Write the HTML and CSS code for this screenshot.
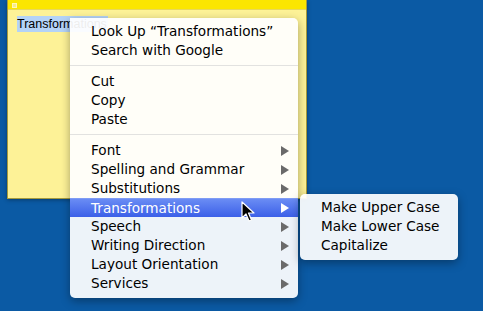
FILE: index.html
```html
<!DOCTYPE html>
<html>
<head>
    <meta name="viewport" content="width=device-width, initial-scale=1.0">
    <title>Sticky note - context menu</title>
    <link rel="stylesheet" href="styles.css">
</head>
<body>
    <div class="desktop">
        <div class="note">
            <div class="note-bar"><span class="note-box"></span></div>
            <div class="note-body">
                <span class="selected">Transformations</span>
            </div>
        </div>

        <!-- context menu -->
        <div class="menu">
            <div class="item">Look Up “Transformations”</div>
            <div class="item">Search with Google</div>
            <div class="sep"></div>
            <div class="item">Cut</div>
            <div class="item">Copy</div>
            <div class="item">Paste</div>
            <div class="sep"></div>
            <div class="item sub">Font</div>
            <div class="item sub">Spelling and Grammar</div>
            <div class="item sub">Substitutions</div>
            <div class="item sub active">Transformations</div>
            <div class="item sub">Speech</div>
            <div class="item sub">Writing Direction</div>
            <div class="item sub">Layout Orientation</div>
            <div class="item sub">Services</div>
        </div>

        <div class="menu submenu">
            <div class="item">Make Upper Case</div>
            <div class="item">Make Lower Case</div>
            <div class="item">Capitalize</div>
        </div>

        <svg class="cursor" width="14" height="22" viewBox="0 0 14 22">
            <path d="M1 1 L1 17 L5 13 L8 20 L10.5 19 L7.5 12 L13 12 Z" fill="#000" stroke="#fff" stroke-width="1.2" stroke-linejoin="round"/>
        </svg>
    </div>
</body>
</html>
```

FILE: styles.css
```css
body {
    margin: 0;
    background-color: #0b5aa4;
    font-family: "DejaVu Sans", sans-serif;
    font-size: 13.6px;
    color: #000;
}
.desktop {
    position: relative;
    width: 483px;
    height: 311px;
    overflow: hidden;
    padding-left: 7px;
    box-sizing: border-box;
}
.note {
    width: 300px;
    height: 199px;
    background: #fdf297;
    border: 1px solid #a59a3c;
    border-top: none;
    box-sizing: border-box;
    box-shadow: 0 1px 4px rgba(0,0,0,0.35);
}
.note-bar {
    height: 10px;
    background: #fbe600;
    border-bottom: 1px solid #e8d85a;
    padding: 3px 0 0 4px;
    box-sizing: border-box;
}
.note-box {
    display: block;
    width: 5px;
    height: 5px;
    background: #f6ea8a;
    border: 1px solid #fff7b8;
    box-sizing: border-box;
}
.note-body {
    padding: 7px 0 0 9px;
    font-family: "Liberation Sans", Arial, sans-serif;
    font-size: 12.5px;
}
.selected {
    background: #b4d3f7;
    padding: 1px 1px 1px 0;
}
.menu {
    position: absolute;
    left: 70px;
    top: 18px;
    width: 228px;
    padding: 4px 0 5px;
    background: rgba(255, 255, 255, 0.93);
    border-radius: 0 5px 5px 5px;
    box-shadow: 0 3px 10px rgba(0,0,0,0.35);
}
.submenu {
    left: 300px;
    top: 194px;
    width: 158px;
    border-radius: 5px;
}
.item {
    height: 19px;
    line-height: 19px;
    padding-left: 21px;
    position: relative;
    white-space: nowrap;
}
.sub::after {
    content: "";
    position: absolute;
    right: 9px;
    top: 5px;
    border-left: 8px solid #6a6a6a;
    border-top: 5px solid transparent;
    border-bottom: 5px solid transparent;
}
.active {
    background: linear-gradient(#6a8cf4, #3b5fe8);
    border-top: 1px solid #7f9cf4;
    height: 18px;
    line-height: 18px;
    color: #fff;
}
.active::after {
    border-left-color: #fff;
    top: 4px;
}
.sep {
    height: 1px;
    background: #e2e2e0;
    margin: 5px 0 6px;
}
.cursor {
    position: absolute;
    left: 241px;
    top: 201px;
}
```
